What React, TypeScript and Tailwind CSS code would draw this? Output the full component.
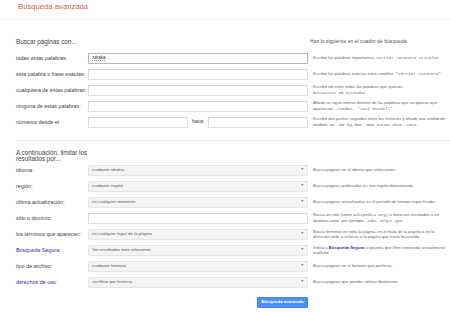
import React from 'react';

const mono = "font-['Liberation_Mono','DejaVu_Sans_Mono',monospace]";

const Code: React.FC<{ children: React.ReactNode }> = ({ children }) => (
  <span className={`${mono} text-[#666]`}>{children}</span>
);

const Row: React.FC<{ label: React.ReactNode; link?: boolean; children: React.ReactNode; help: React.ReactNode }> = ({
  label,
  link,
  children,
  help,
}) => (
  <div className="flex h-[16px] items-center">
    <div className={`w-[72px] text-[5.4px] leading-[7px] ${link ? 'text-[#2a35a8]' : 'text-[#444]'}`}>{label}</div>
    <div className="flex w-[220px] items-center">{children}</div>
    <div className="ml-[5px] w-[134px] text-[4.2px] leading-[5.5px] text-[#666]">{help}</div>
  </div>
);

const TextBox: React.FC<{ value?: string; active?: boolean; className?: string }> = ({ value, active, className }) => (
  <div
    className={`flex h-[11px] items-center border bg-white pl-[3px] text-[4.6px] text-[#333] ${
      active ? 'border-[#aab8c8]' : 'border-[#e0e0e0] border-t-[#d4d4d4]'
    } ${className ?? 'w-full'}`}
  >
    {value && <span className="underline decoration-dotted decoration-[#e07070] decoration-[0.5px]">{value}</span>}
  </div>
);

const Select: React.FC<{ value: string }> = ({ value }) => (
  <div className="flex h-[11px] w-full items-center justify-between rounded-[1px] border border-[#e6e6e6] bg-[#f4f4f4] pl-[3px] pr-[3px] text-[4.4px] text-[#555]">
    <span>{value}</span>
    <span className="text-[3.5px] text-[#888]">▼</span>
  </div>
);

export default function App() {
  return (
    <div className="h-[312px] w-[450px] overflow-hidden bg-white font-['Liberation_Sans',Arial,sans-serif]">
      <div className="flex h-[20px] items-center border-b border-[#efefef] pb-[5px] pl-[18px] text-[7.7px] text-[#d65d52]">
        Búsqueda avanzada
      </div>

      <div className="pl-[16px]">
        <div className="mb-[2px] mt-[16px] flex h-[12px] items-center">
          <div className="w-[294px] text-[6.3px] text-[#444]">Buscar páginas con...</div>
          <div className="text-[5.1px] text-[#555]">Haz lo siguiente en el cuadro de búsqueda:</div>
        </div>

        <Row
          label="todas estas palabras:"
          help={
            <>
              Escribe las palabras importantes: <Code>terrier ratonero tricolor</Code>
            </>
          }
        >
          <TextBox value="xataka" active />
        </Row>
        <Row
          label="esta palabra o frase exactas:"
          help={
            <>
              Escribe las palabras exactas entre comillas: <Code>"terrier ratonero"</Code>
            </>
          }
        >
          <TextBox />
        </Row>
        <Row
          label="cualquiera de estas palabras:"
          help={
            <>
              Escribe <Code>OR</Code> entre todas las palabras que quieras:
              <br />
              <Code>miniatura OR estándar</Code>
            </>
          }
        >
          <TextBox />
        </Row>
        <Row
          label="ninguna de estas palabras:"
          help={
            <>
              Añade un signo menos delante de las palabras que no quieras que aparezcan: <Code>-roedor</Code>,{' '}
              <Code>-"Jack Russell"</Code>
            </>
          }
        >
          <TextBox />
        </Row>
        <Row
          label="números desde el:"
          help={
            <>
              Escribe dos puntos seguidos entre los números y añade una unidad de medida: <Code>10..35 kg</Code>,{' '}
              <Code>300..500 euros</Code>, <Code>2010..2011</Code>
            </>
          }
        >
          <TextBox className="w-[100px]" />
          <span className="ml-[4px] w-[16px] text-[4.6px] text-[#444]">hasta</span>
          <TextBox className="w-[100px]" />
        </Row>

        <div className="mt-[10px] border-t border-[#ededed] pt-[9px]">
          <div className="h-[12px] text-[6.3px] leading-[6px] text-[#444]">
            A continuación, limitar los
            <br />
            resultados por...
          </div>

          <Row label="idioma:" help="Busca páginas en el idioma que selecciones.">
            <Select value="cualquier idioma" />
          </Row>
          <Row label="región:" help="Busca páginas publicadas en una región determinada.">
            <Select value="cualquier región" />
          </Row>
          <Row label="última actualización:" help="Busca páginas actualizadas en el período de tiempo especificado.">
            <Select value="en cualquier momento" />
          </Row>
          <Row
            label="sitio o dominio:"
            help={
              <>
                Busca un sitio (como <Code>wikipedia.org</Code> ) o limita los resultados a un dominio como, por ejemplo,{' '}
                <Code>.edu</Code>, <Code>.org</Code> o <Code>.gov</Code>
              </>
            }
          >
            <TextBox />
          </Row>
          <Row
            label="los términos que aparecen:"
            help="Busca términos en toda la página, en el título de la página o en la dirección web, o enlaces a la página que estás buscando."
          >
            <Select value="en cualquier lugar de la página" />
          </Row>
          <Row
            label="Búsqueda Segura:"
            link
            help={
              <>
                Indica a <span className="font-bold text-[#2a35a8]">Búsqueda Segura</span> si quieres que filtre
                contenido sexualmente explícito.
              </>
            }
          >
            <Select value="Ver resultados más relevantes" />
          </Row>
          <Row label="tipo de archivo:" help="Busca páginas en el formato que prefieras.">
            <Select value="cualquier formato" />
          </Row>
          <Row label="derechos de uso:" link help="Busca páginas que puedas utilizar libremente.">
            <Select value="sin filtrar por licencia" />
          </Row>

          <div className="mt-[7px] flex w-[292px] justify-end">
            <button className="flex h-[11px] w-[51px] items-center justify-center rounded-[1px] border border-[#3f85f5] bg-[#4d90fe] text-[4.4px] font-bold text-white">
              Búsqueda avanzada
            </button>
          </div>
        </div>
      </div>
    </div>
  );
}
